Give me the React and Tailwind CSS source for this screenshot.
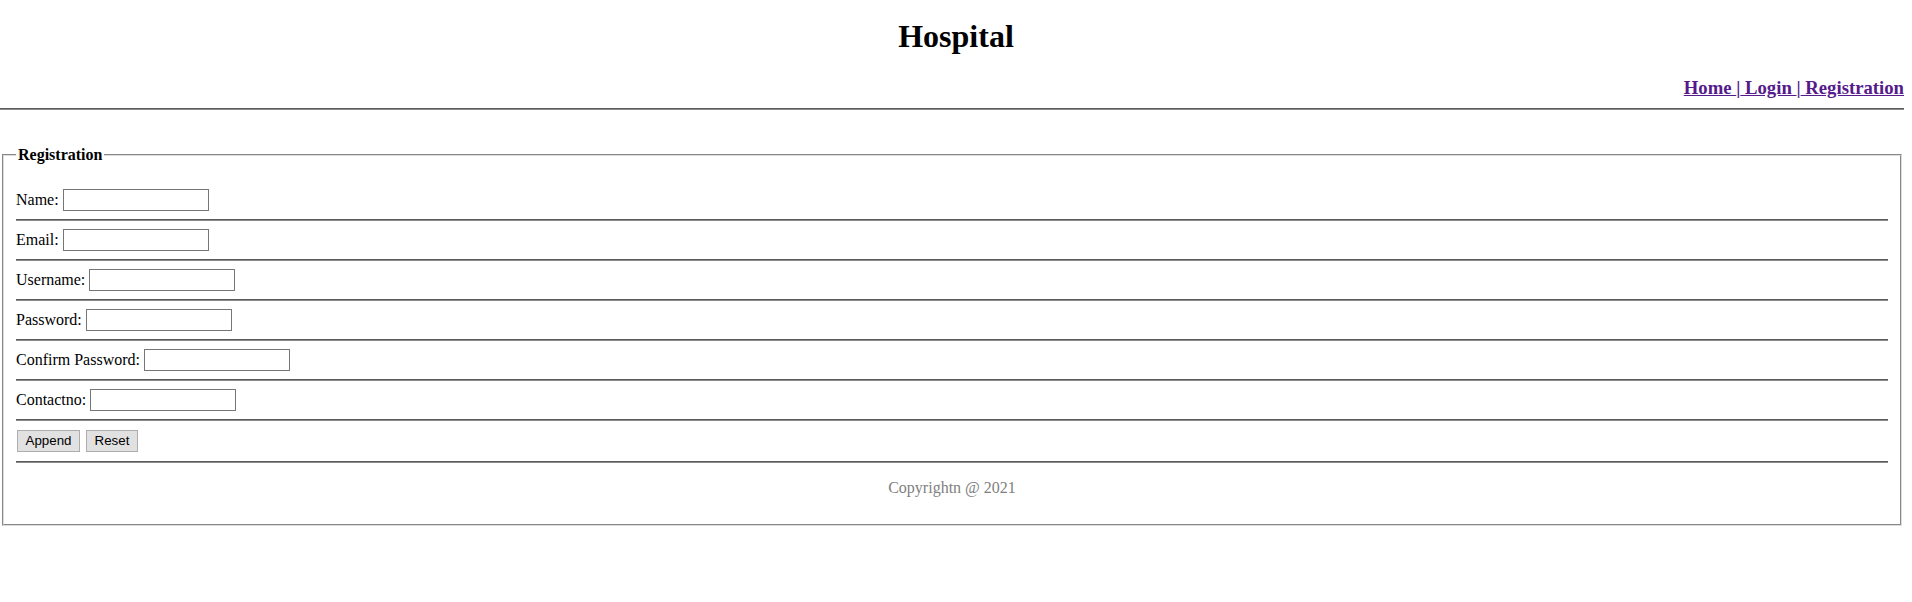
import React from 'react'

const fields = [
  { label: 'Name:', type: 'text' },
  { label: 'Email:', type: 'text' },
  { label: 'Username:', type: 'text' },
  { label: 'Password:', type: 'password' },
  { label: 'Confirm Password:', type: 'password' },
  { label: 'Contactno:', type: 'text' },
]

function Rule() {
  return <div className="h-0 border-t border-b border-t-[#5c5c5c] border-b-[#8a8a8a]" />
}

export default function App() {
  return (
    <div className="min-h-screen bg-white text-black font-['Liberation_Serif',serif]">
      <h1 className="pt-[18px] text-center text-[32px] font-bold leading-[37px]">Hospital</h1>

      {/* menu */}
      <div className="mt-[22px] pr-[8px] text-right text-[18.72px] font-bold leading-[21px] text-[#551a8b]">
        <a href="#" className="underline">Home </a>|<a href="#" className="underline"> Login </a>|<a href="#" className="underline"> Registration</a>
      </div>

      <div className="mt-[10px] mr-[8px]">
        <Rule />
      </div>

      <fieldset className="mt-[36px] ml-[2px] mr-[10px] px-[12px] pb-[27px] [border:2px_groove_#dcdcdc]">
        <legend className="px-[2px] text-[16px] font-bold leading-[18px]">Registration</legend>
        <div className="pt-[17px] text-[16px] leading-[18px]">
          {fields.map((f) => (
            <div key={f.label}>
              <div className="flex h-[38px] items-center gap-[4px]">
                <span>{f.label}</span>
                <input type={f.type} className="h-[22px] w-[146px] border border-[#767676] bg-white px-[2px] outline-none" />
              </div>
              <Rule />
            </div>
          ))}
          <div className="flex h-[40px] items-center gap-[6px] pl-[1px]">
            <button className="h-[22px] w-[63px] border border-[#adadad] bg-[#e1e1e1] text-[13.33px] font-['Liberation_Sans',sans-serif]">Append</button>
            <button className="h-[22px] w-[52px] border border-[#adadad] bg-[#e1e1e1] text-[13.33px] font-['Liberation_Sans',sans-serif]">Reset</button>
          </div>
          <Rule />
          <p className="mt-[16px] text-center text-[#808080]">Copyrightn @ 2021</p>
        </div>
      </fieldset>
    </div>
  )
}
